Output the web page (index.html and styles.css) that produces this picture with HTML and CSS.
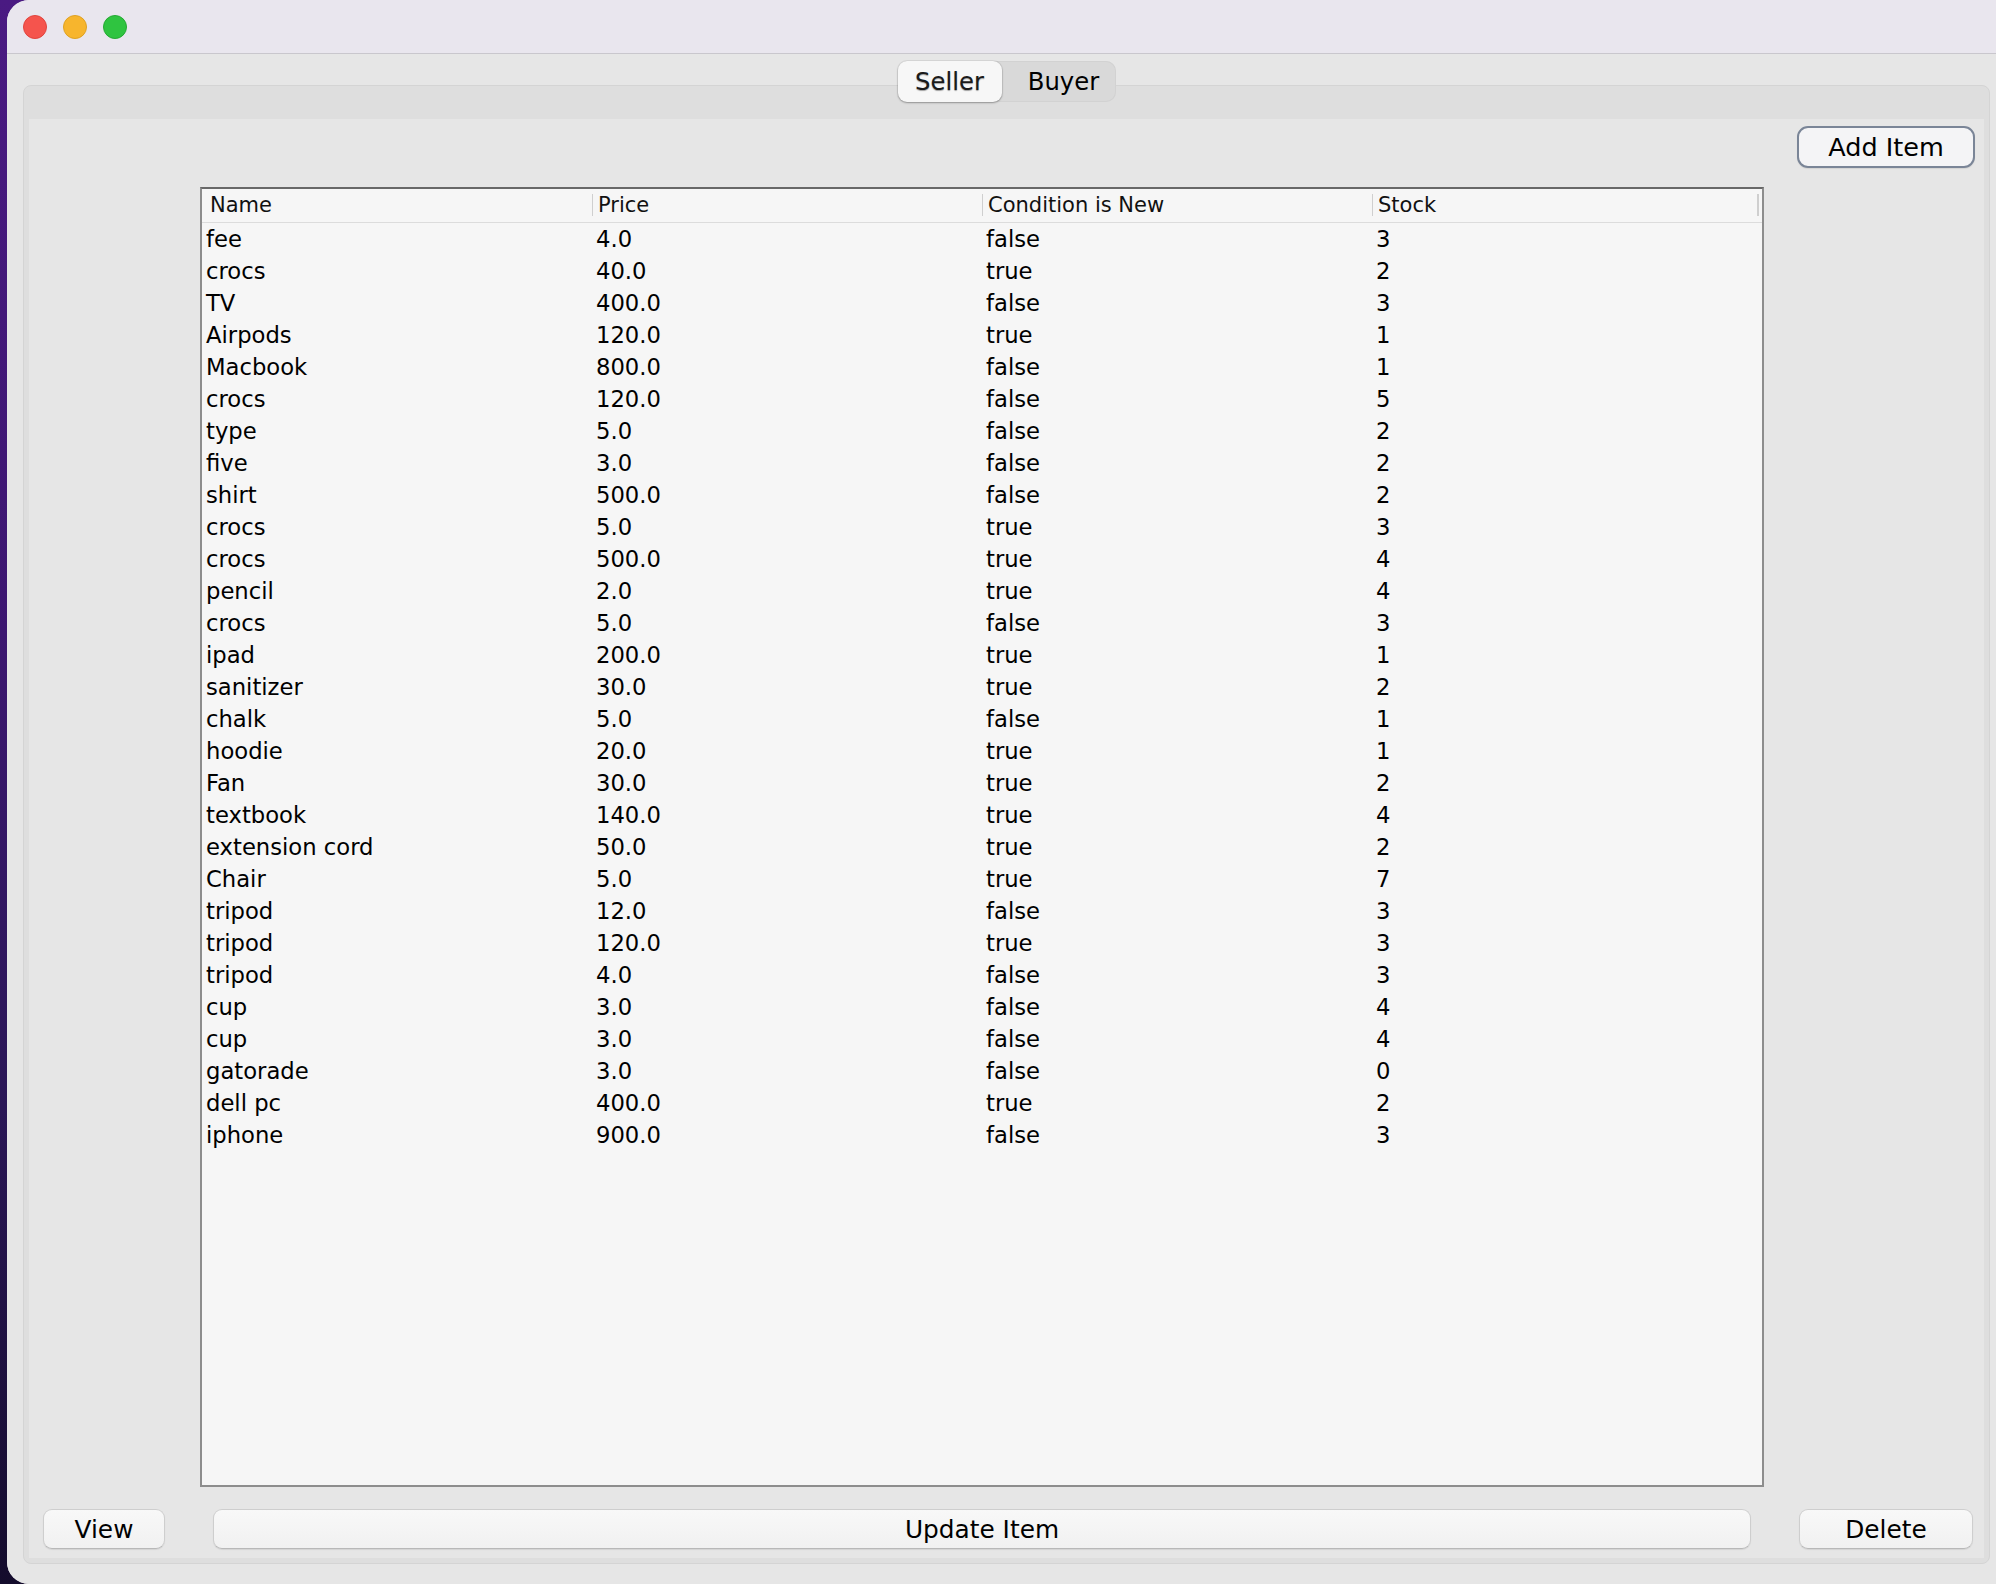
FILE: index.html
```html
<!DOCTYPE html>
<html>
<head>
<meta charset="utf-8">
<title>Seller</title>
<link rel="stylesheet" href="styles.css">
</head>
<body>
<div class="desktop">
  <div class="window">
    <div class="titlebar">
      <span class="light red"></span>
      <span class="light yellow"></span>
      <span class="light green"></span>
    </div>
    <div class="window-body">
      <div class="pane">
        <div class="segmented">
          <div class="seg seg-active">Seller</div>
          <div class="seg seg-buyer">Buyer</div>
        </div>
        <div class="pane-header"></div>
        <div class="pane-content">
          <div class="top-row">
            <button class="btn btn-default">Add Item</button>
          </div>
          <div class="table-box">
            <table class="grid">
              <thead>
                <tr>
                  <th>Name</th>
                  <th class="sep">Price</th>
                  <th class="sep">Condition is New</th>
                  <th class="sep sep-end">Stock</th>
                </tr>
              </thead>
              <tbody>
                <tr><td>fee</td><td>4.0</td><td>false</td><td>3</td></tr>
                <tr><td>crocs</td><td>40.0</td><td>true</td><td>2</td></tr>
                <tr><td>TV</td><td>400.0</td><td>false</td><td>3</td></tr>
                <tr><td>Airpods</td><td>120.0</td><td>true</td><td>1</td></tr>
                <tr><td>Macbook</td><td>800.0</td><td>false</td><td>1</td></tr>
                <tr><td>crocs</td><td>120.0</td><td>false</td><td>5</td></tr>
                <tr><td>type</td><td>5.0</td><td>false</td><td>2</td></tr>
                <tr><td>five</td><td>3.0</td><td>false</td><td>2</td></tr>
                <tr><td>shirt</td><td>500.0</td><td>false</td><td>2</td></tr>
                <tr><td>crocs</td><td>5.0</td><td>true</td><td>3</td></tr>
                <tr><td>crocs</td><td>500.0</td><td>true</td><td>4</td></tr>
                <tr><td>pencil</td><td>2.0</td><td>true</td><td>4</td></tr>
                <tr><td>crocs</td><td>5.0</td><td>false</td><td>3</td></tr>
                <tr><td>ipad</td><td>200.0</td><td>true</td><td>1</td></tr>
                <tr><td>sanitizer</td><td>30.0</td><td>true</td><td>2</td></tr>
                <tr><td>chalk</td><td>5.0</td><td>false</td><td>1</td></tr>
                <tr><td>hoodie</td><td>20.0</td><td>true</td><td>1</td></tr>
                <tr><td>Fan</td><td>30.0</td><td>true</td><td>2</td></tr>
                <tr><td>textbook</td><td>140.0</td><td>true</td><td>4</td></tr>
                <tr><td>extension cord</td><td>50.0</td><td>true</td><td>2</td></tr>
                <tr><td>Chair</td><td>5.0</td><td>true</td><td>7</td></tr>
                <tr><td>tripod</td><td>12.0</td><td>false</td><td>3</td></tr>
                <tr><td>tripod</td><td>120.0</td><td>true</td><td>3</td></tr>
                <tr><td>tripod</td><td>4.0</td><td>false</td><td>3</td></tr>
                <tr><td>cup</td><td>3.0</td><td>false</td><td>4</td></tr>
                <tr><td>cup</td><td>3.0</td><td>false</td><td>4</td></tr>
                <tr><td>gatorade</td><td>3.0</td><td>false</td><td>0</td></tr>
                <tr><td>dell pc</td><td>400.0</td><td>true</td><td>2</td></tr>
                <tr><td>iphone</td><td>900.0</td><td>false</td><td>3</td></tr>
              </tbody>
            </table>
          </div>
          <div class="bottom-row">
            <button class="btn btn-view">View</button>
            <button class="btn btn-update">Update Item</button>
            <button class="btn btn-delete">Delete</button>
          </div>
        </div>
      </div>
    </div>
  </div>
</div>
</body>
</html>
```

FILE: styles.css
```css
html, body {
  margin: 0;
  padding: 0;
}

body {
  width: 1996px;
  height: 1584px;
  overflow: hidden;
  background: linear-gradient(180deg, #4a1a82 0%, #3c1670 40%, #2a1656 70%, #140c2c 100%);
  font-family: "DejaVu Sans", "Liberation Sans", sans-serif;
  color: #000;
}

.desktop {
  padding-left: 7px;
  height: 1584px;
}

.window {
  width: 1999px;
  height: 1584px;
  background: #e4e4e4;
  border-radius: 22px 0 0 22px;
  overflow: hidden;
  display: flex;
  flex-direction: column;
}

.titlebar {
  height: 54px;
  flex: none;
  background: #e9e6ee;
  border-bottom: 1px solid #c9c7cd;
  display: flex;
  align-items: center;
  gap: 16px;
  padding-left: 16px;
  box-sizing: border-box;
}

.light {
  width: 24px;
  height: 24px;
  border-radius: 50%;
  box-sizing: border-box;
}
.red { background: #f5544d; border: 1px solid #e0443e; }
.yellow { background: #f7b52d; border: 1px solid #dea123; }
.green { background: #2fc440; border: 1px solid #25a933; }

.window-body {
  flex: 1;
  padding: 31px 16px 20px 16px;
  display: flex;
  flex-direction: column;
  background: #e6e6e6;
}

.pane {
  position: relative;
  flex: 1;
  border: 1px solid #d4d4d4;
  border-radius: 8px;
  background: #dedede;
  display: flex;
  flex-direction: column;
}

.pane-header {
  height: 33px;
  flex: none;
}

.segmented {
  position: absolute;
  top: -25px;
  left: 50%;
  transform: translateX(-50%);
  width: 218px;
  height: 41px;
  background: #d9d9d9;
  border-radius: 10px;
  box-shadow: inset 0 0 0 1px #d2d2d2;
  display: flex;
  font-size: 24.3px;
}

.seg {
  display: flex;
  align-items: center;
  justify-content: center;
  height: 41px;
  width: 114px;
  color: #000;
  box-sizing: border-box;
}

.seg-buyer {
  padding-left: 10px;
}

.seg-active {
  width: 104px;
  background: #f7f7f7;
  border-radius: 9px;
  box-shadow: 0 1px 2px rgba(0, 0, 0, 0.3), 0 0 0 1px rgba(0, 0, 0, 0.06);
  text-shadow: 0 1px 1px rgba(0, 0, 0, 0.35);
  color: #1a1a1a;
}

.pane-content {
  flex: 1;
  margin: 0 5px 5px 5px;
  background: #e6e6e6;
  display: flex;
  flex-direction: column;
}

.top-row {
  display: flex;
  justify-content: flex-end;
  padding: 7px 9px 0 0;
}

.btn {
  font-family: "DejaVu Sans", "Liberation Sans", sans-serif;
  font-size: 24.8px;
  color: #000;
  height: 40px;
  background: linear-gradient(180deg, #f8f8f8 0%, #f1f1f1 100%);
  border: 1px solid #cecece;
  border-bottom-color: #b8b8b8;
  border-radius: 9px;
  box-shadow: 0 1px 1px rgba(0, 0, 0, 0.08);
  padding: 0;
  margin: 0;
  box-sizing: border-box;
}

.btn-default {
  width: 178px;
  height: 42px;
  font-size: 25.5px;
  border: 2px solid #7a8597;
  border-radius: 11px;
  background: #f4f4f6;
}

.table-box {
  margin: 19px 220px 0 171px;
  height: 1300px;
  flex: none;
  box-sizing: border-box;
  border: 2px solid #8d8d8d;
  border-top-color: #686868;
  background: #f6f6f6;
  overflow: hidden;
}

.grid {
  width: 1560px;
  border-collapse: collapse;
  table-layout: fixed;
}

.grid th {
  height: 33px;
  padding: 0 0 0 8px;
  text-align: left;
  font-weight: normal;
  font-size: 21px;
  color: #111;
  border-bottom: 1px solid #dcdcdc;
  box-sizing: border-box;
  white-space: nowrap;
}

.grid th.sep {
  padding-left: 6px;
  background-image: linear-gradient(#cfcfcf, #cfcfcf);
  background-size: 1px 22px;
  background-position: left center;
  background-repeat: no-repeat;
}

.grid th.sep-end {
  background-image: linear-gradient(#cfcfcf, #cfcfcf), linear-gradient(#cfcfcf, #cfcfcf);
  background-size: 1px 22px, 2px 22px;
  background-position: left center, right 3px center;
}

.grid td {
  height: 32px;
  line-height: 32px;
  padding: 0 0 0 4px;
  font-size: 22.7px;
  color: #000;
  white-space: nowrap;
}

.bottom-row {
  margin-top: 22px;
  padding: 0 11px 7px 14px;
  display: flex;
  gap: 48px;
}

.btn-view { width: 122px; }
.btn-update { flex: 1; }
.btn-delete { width: 174px; }
```
